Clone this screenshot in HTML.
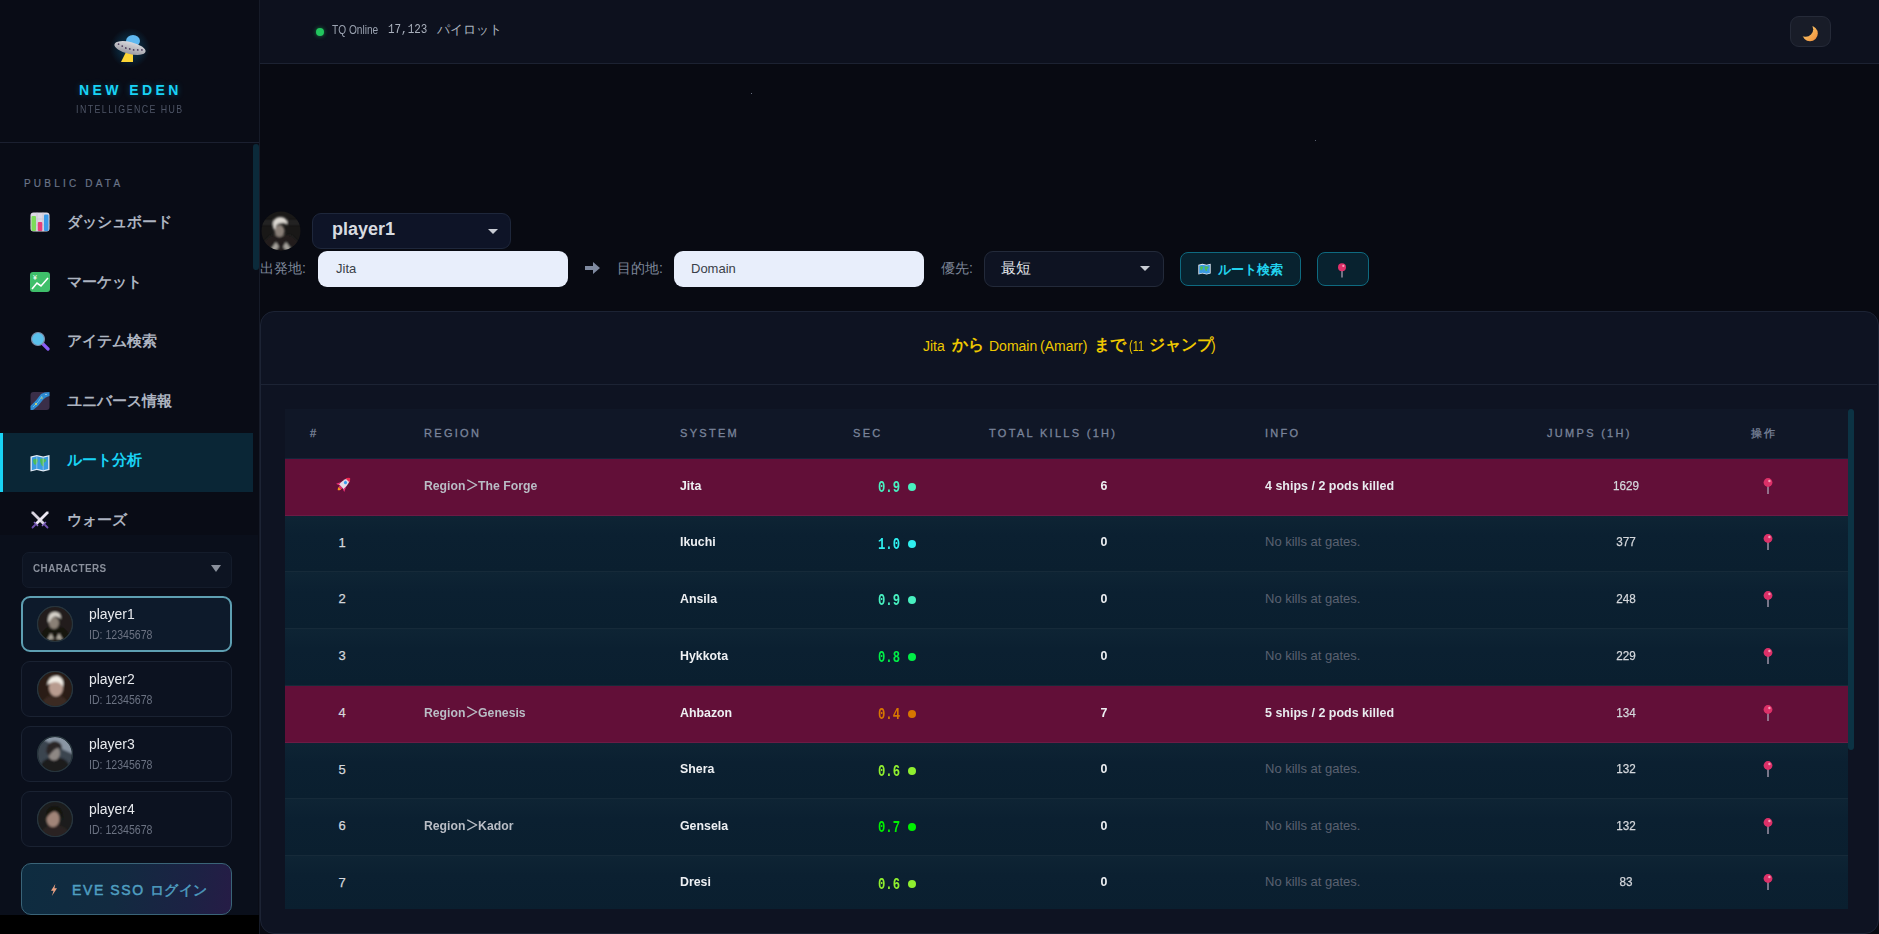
<!DOCTYPE html>
<html><head><meta charset="utf-8">
<style>
*{margin:0;padding:0;box-sizing:border-box}
html,body{width:1879px;height:934px;overflow:hidden;background:#080a12;font-family:"Liberation Sans",sans-serif;color:#d1d5db}
.abs{position:absolute}
#side{position:absolute;left:0;top:0;width:259px;height:915px;background:#090c16}
#sideb{position:absolute;left:0;top:915px;width:259px;height:19px;background:#000}
#sideline{position:absolute;left:259px;top:0;width:1px;height:934px;background:#161b28}
#logo{position:absolute;left:0;top:0;width:259px;height:143px;border-bottom:1px solid #1b2030}
.t{position:absolute;white-space:nowrap}
.nav{position:absolute;left:0;width:253px;height:59px}
.nav .ic{position:absolute;left:30px;top:20px;width:20px;height:20px}
.nav .tx{position:absolute;left:67px;top:0;line-height:59px;font-size:15px;font-weight:bold;color:#adb4c0}
#header{position:absolute;left:260px;top:0;width:1619px;height:64px;background:#0d111e;border-bottom:1px solid #1c2232}
#main{position:absolute;left:260px;top:64px;width:1619px;height:870px;background:#080a12}
.th{font-size:11px;letter-spacing:2.3px;color:#7a849a;line-height:14px;-webkit-text-stroke:0.3px #7a849a}
.td{font-size:13px;color:#d4d7dc;line-height:16px}
.num{}
.num{display:block;-webkit-text-stroke:0.25px #d4d7dc}
.reg{font-weight:bold;color:#b9bdc5;transform:scaleX(0.94);transform-origin:left}
.sys{font-weight:bold;color:#eef0f3;transform:scaleX(0.95);transform-origin:left}
.sec{font-family:"Liberation Mono",monospace;font-weight:bold;font-size:17px;transform:scaleX(0.72);transform-origin:left}
.info{font-weight:bold;color:#e8eaee;transform:scaleX(0.96);transform-origin:left}
.nok{color:#5a6170}
.ttl{top:337px;font-size:14px;line-height:18px;color:#eec800}
.jp{font-size:15.5px;font-weight:bold;top:336px}
</style></head><body>
<div id="main">
  <div id="stars" class="abs" style="left:491px;top:29px;width:1px;height:1px;background:#6a7080"></div><div class="abs" style="left:1055px;top:76px;width:1px;height:1px;background:#5a6070"></div>
  <svg class="abs" style="left:1px;top:147px" width="40" height="40" viewBox="0 0 40 40"><defs><clipPath id="mav"><circle cx="20" cy="20" r="19.5"/></clipPath><filter id="bl" x="-10%" y="-10%" width="120%" height="120%"><feGaussianBlur stdDeviation="0.9"/></filter></defs>
<g clip-path="url(#mav)"><rect width="40" height="40" fill="#191817"/><g filter="url(#bl)"><rect y="9" width="40" height="5" fill="#242322"/>
<path d="M1,40 Q3,27 11,24 L29,24 Q37,27 39,40Z" fill="#201f1e"/>
<path d="M10,38 L15,31 L18,36 L14,40Z M30,38 L25,31 L22,36 L26,40Z" fill="#a8a49e"/>
<ellipse cx="18.5" cy="20" rx="5" ry="6" fill="#8a8078"/>
<path d="M12,17 Q11,6 19,6 Q27,6 26,14 Q25,11 20,12 Q15,12 14,19Z" fill="#dcd8d2"/></g></g></svg>
  <div class="abs" style="left:52px;top:149px;width:199px;height:36px;border-radius:9px;background:#0e1427;border:1px solid #1e273b"></div>
  <div class="t" style="left:72px;top:155px;font-size:18px;font-weight:bold;color:#d8dbe0">player1</div>
  <div class="abs" style="left:228px;top:165px;width:0;height:0;border-left:5px solid transparent;border-right:5px solid transparent;border-top:5px solid #c8ccd4"></div>

  <div class="t" style="left:0px;top:196px;font-size:14px;color:#7d8698">出発地:</div>
  <div class="abs" style="left:58px;top:187px;width:250px;height:36px;border-radius:9px;background:#e8eefb"></div>
  <div class="t" style="left:76px;top:197px;font-size:13px;color:#3a3f48">Jita</div>
  <svg class="abs" style="left:325px;top:198px" width="15" height="12" viewBox="0 0 15 12"><path d="M0,4 L8,4 L8,0 L15,6 L8,12 L8,8 L0,8Z" fill="#7f8aa0"/></svg>
  <div class="t" style="left:357px;top:196px;font-size:14px;color:#7d8698">目的地:</div>
  <div class="abs" style="left:414px;top:187px;width:250px;height:36px;border-radius:9px;background:#e8eefb"></div>
  <div class="t" style="left:431px;top:197px;font-size:13px;color:#3a3f48">Domain</div>
  <div class="t" style="left:681px;top:196px;font-size:14px;color:#7d8698">優先:</div>
  <div class="abs" style="left:724px;top:187px;width:180px;height:36px;border-radius:9px;background:#0e1322;border:1px solid #232a3a"></div>
  <div class="t" style="left:741px;top:195px;font-size:15px;font-weight:500;color:#e2e5ea">最短</div>
  <div class="abs" style="left:880px;top:202px;width:0;height:0;border-left:5px solid transparent;border-right:5px solid transparent;border-top:5px solid #c8ccd4"></div>
  <div class="abs" style="left:920px;top:188px;width:121px;height:34px;border-radius:8px;background:#08222f;border:1px solid #0e6a80"></div>
  <svg class="abs" style="left:938px;top:199px" width="13" height="12" viewBox="0 0 20 18"><path d="M0.5,2.5 L6.8,1 L13.2,2.5 L19.5,1 L19.5,16 L13.2,17.5 L6.8,16 L0.5,17.5Z" fill="#e6eef8"/><path d="M1.8,3.5 L6.8,2.3 L13.2,3.8 L18.2,2.5 L18.2,15 L13.2,16.2 L6.8,14.8 L1.8,16.2Z" fill="#3a9ae0"/><path d="M3,6 Q5,4 7.5,5 Q8.5,7 7,9 Q5.5,12 4,10 Q3,8 3,6Z M10,5 Q13,4 16,5.5 Q17,7 15,8 Q13,9 14,12 Q12,13 11,10 Q10,8 10,5Z" fill="#4cbc5a"/></svg>
  <div class="t" style="left:958px;top:197px;font-size:13px;font-weight:bold;color:#22d3ee">ルート検索</div>
  <div class="abs" style="left:1057px;top:188px;width:52px;height:34px;border-radius:8px;background:#08222f;border:1px solid #0e6a80"></div>
  <svg class="abs" style="left:1077px;top:199px" width="10" height="15" viewBox="0 0 10 15"><line x1="5" y1="6" x2="5" y2="14.5" stroke="#a89cb0" stroke-width="1.3"/><circle cx="5" cy="4.3" r="4" fill="#e0306a"/><circle cx="6.3" cy="2.9" r="1.1" fill="#f4a0b8"/></svg>

  <div id="card" class="abs" style="left:0;top:247px;width:1619px;height:623px;border-radius:14px;background:#0e1322;border:1px solid #1c2334">
  </div>
</div>
<!--TABLE-->
<div class="t ttl" style="left:923px">Jita</div><div class="t ttl jp" style="left:952px">から</div><div class="t ttl" style="left:989px">Domain</div><div class="t ttl" style="left:1040px">(Amarr)</div><div class="t ttl jp" style="left:1094px">まで</div><div class="t ttl" style="left:1129px;transform:scaleX(0.78);transform-origin:left">(11</div><div class="t ttl jp" style="left:1149px">ジャンプ</div><div class="t ttl" style="left:1211px">)</div>
<div class="abs" style="left:261px;top:384px;width:1616px;height:1px;background:#1c2334"></div>
<div class="abs" style="left:285px;top:409px;width:1563px;height:500px;background:#0b1c2b;overflow:hidden">
  <div class="abs" style="left:0;top:0;width:1563px;height:50px;background:#101727;border-bottom:1px solid #14253a"></div>
  <div class="t th" style="left:25px;top:17px">#</div>
  <div class="t th" style="left:139px;top:17px">REGION</div>
  <div class="t th" style="left:395px;top:17px">SYSTEM</div>
  <div class="t th" style="left:568px;top:17px">SEC</div>
  <div class="t th" style="left:704px;top:17px">TOTAL KILLS (1H)</div>
  <div class="t th" style="left:980px;top:17px">INFO</div>
  <div class="t th" style="left:1262px;top:17px">JUMPS (1H)</div>
  <div class="t th" style="left:1466px;top:17px">操作</div>
  <div class="abs" style="left:0;top:50px;width:1563px;height:57px;background:#620f38;border-bottom:1px solid #6c1b45"></div>
  <div class="abs" style="left:47.5px;top:65.5px"><svg width="20" height="20" viewBox="0 0 20 20"><g transform="rotate(45 10 10)"><path d="M10,0 Q13.6,3.5 13.4,12.5 L6.6,12.5 Q6.4,3.5 10,0Z" fill="#e6dbe6"/><path d="M10,0 Q12.2,1.6 12.9,3.6 L7.1,3.6 Q7.8,1.6 10,0Z" fill="#ee2a52"/><circle cx="10" cy="6.5" r="1.6" fill="#3a9cf0"/><path d="M6.6,9 L4.2,14 L6.8,13.2Z M13.4,9 L15.8,14 L13.2,13.2Z" fill="#f0307a"/><path d="M8,12.5 L12,12.5 L11.4,15 L10,14.2 L8.6,15Z" fill="#e83070"/><path d="M8.2,14.5 Q10,20 11.8,14.5Z" fill="#f7931e"/></g></svg></div>
  <div class="t td reg" style="left:139px;top:68.5px">Region<svg width="12" height="12" viewBox="0 0 12 12" style="display:inline-block;vertical-align:-1px;margin:0 0.5px 0 1px"><path d="M1,0.8 L11,6 L1,11.2" stroke="#b9bdc5" stroke-width="1.3" fill="none"/></svg>The Forge</div>
  <div class="t td sys" style="left:395px;top:68.5px">Jita</div>
  <div class="t td sec" style="left:592.5px;top:71.0px;color:#48f0c0">0.9</div>
  <div class="abs" style="left:623px;top:74.0px;width:8px;height:8px;border-radius:50%;background:#48f0c0"></div>
  <div class="t td sys" style="left:680.5px;width:276px;text-align:center;top:68.5px;transform-origin:center">6</div>
  <div class="t td info" style="left:980px;top:68.5px">4 ships / 2 pods killed</div>
  <div class="t td num" style="left:1238.5px;width:204px;text-align:center;top:68.5px;transform:scaleX(0.9)">1629</div>
  <div class="abs" style="left:1478px;top:68.5px"><svg width="10" height="16" viewBox="0 0 10 16"><line x1="5" y1="7" x2="5" y2="16" stroke="#a89cb0" stroke-width="1.4"/><circle cx="5" cy="4.5" r="4.4" fill="#dc3068"/><circle cx="6.4" cy="3" r="1.2" fill="#f4a0b8"/></svg></div>
  <div class="abs" style="left:0;top:107px;width:1563px;height:56px;background:linear-gradient(180deg,#0e2434 0,#0b2031 35%,#0a1f2f 100%);border-bottom:1px solid #162a39"></div>
  <div class="t td num" style="left:0;width:114px;text-align:center;top:125.5px">1</div>
  <div class="t td sys" style="left:395px;top:125.0px">Ikuchi</div>
  <div class="t td sec" style="left:592.5px;top:127.5px;color:#2fefef">1.0</div>
  <div class="abs" style="left:623px;top:130.5px;width:8px;height:8px;border-radius:50%;background:#2fefef"></div>
  <div class="t td sys" style="left:680.5px;width:276px;text-align:center;top:125.0px;transform-origin:center">0</div>
  <div class="t td nok" style="left:980px;top:125.0px">No kills at gates.</div>
  <div class="t td num" style="left:1238.5px;width:204px;text-align:center;top:125.0px;transform:scaleX(0.9)">377</div>
  <div class="abs" style="left:1478px;top:125.0px"><svg width="10" height="16" viewBox="0 0 10 16"><line x1="5" y1="7" x2="5" y2="16" stroke="#a89cb0" stroke-width="1.4"/><circle cx="5" cy="4.5" r="4.4" fill="#dc3068"/><circle cx="6.4" cy="3" r="1.2" fill="#f4a0b8"/></svg></div>
  <div class="abs" style="left:0;top:163px;width:1563px;height:57px;background:linear-gradient(180deg,#0e2434 0,#0b2031 35%,#0a1f2f 100%);border-bottom:1px solid #162a39"></div>
  <div class="t td num" style="left:0;width:114px;text-align:center;top:182.0px">2</div>
  <div class="t td sys" style="left:395px;top:181.5px">Ansila</div>
  <div class="t td sec" style="left:592.5px;top:184.0px;color:#48f0c0">0.9</div>
  <div class="abs" style="left:623px;top:187.0px;width:8px;height:8px;border-radius:50%;background:#48f0c0"></div>
  <div class="t td sys" style="left:680.5px;width:276px;text-align:center;top:181.5px;transform-origin:center">0</div>
  <div class="t td nok" style="left:980px;top:181.5px">No kills at gates.</div>
  <div class="t td num" style="left:1238.5px;width:204px;text-align:center;top:181.5px;transform:scaleX(0.9)">248</div>
  <div class="abs" style="left:1478px;top:181.5px"><svg width="10" height="16" viewBox="0 0 10 16"><line x1="5" y1="7" x2="5" y2="16" stroke="#a89cb0" stroke-width="1.4"/><circle cx="5" cy="4.5" r="4.4" fill="#dc3068"/><circle cx="6.4" cy="3" r="1.2" fill="#f4a0b8"/></svg></div>
  <div class="abs" style="left:0;top:220px;width:1563px;height:57px;background:linear-gradient(180deg,#0e2434 0,#0b2031 35%,#0a1f2f 100%);border-bottom:1px solid #162a39"></div>
  <div class="t td num" style="left:0;width:114px;text-align:center;top:239.0px">3</div>
  <div class="t td sys" style="left:395px;top:238.5px">Hykkota</div>
  <div class="t td sec" style="left:592.5px;top:241.0px;color:#00ef47">0.8</div>
  <div class="abs" style="left:623px;top:244.0px;width:8px;height:8px;border-radius:50%;background:#00ef47"></div>
  <div class="t td sys" style="left:680.5px;width:276px;text-align:center;top:238.5px;transform-origin:center">0</div>
  <div class="t td nok" style="left:980px;top:238.5px">No kills at gates.</div>
  <div class="t td num" style="left:1238.5px;width:204px;text-align:center;top:238.5px;transform:scaleX(0.9)">229</div>
  <div class="abs" style="left:1478px;top:238.5px"><svg width="10" height="16" viewBox="0 0 10 16"><line x1="5" y1="7" x2="5" y2="16" stroke="#a89cb0" stroke-width="1.4"/><circle cx="5" cy="4.5" r="4.4" fill="#dc3068"/><circle cx="6.4" cy="3" r="1.2" fill="#f4a0b8"/></svg></div>
  <div class="abs" style="left:0;top:277px;width:1563px;height:57px;background:#620f38;border-bottom:1px solid #6c1b45"></div>
  <div class="t td num" style="left:0;width:114px;text-align:center;top:296.0px">4</div>
  <div class="t td reg" style="left:139px;top:295.5px">Region<svg width="12" height="12" viewBox="0 0 12 12" style="display:inline-block;vertical-align:-1px;margin:0 0.5px 0 1px"><path d="M1,0.8 L11,6 L1,11.2" stroke="#b9bdc5" stroke-width="1.3" fill="none"/></svg>Genesis</div>
  <div class="t td sys" style="left:395px;top:295.5px">Ahbazon</div>
  <div class="t td sec" style="left:592.5px;top:298.0px;color:#d77700">0.4</div>
  <div class="abs" style="left:623px;top:301.0px;width:8px;height:8px;border-radius:50%;background:#d77700"></div>
  <div class="t td sys" style="left:680.5px;width:276px;text-align:center;top:295.5px;transform-origin:center">7</div>
  <div class="t td info" style="left:980px;top:295.5px">5 ships / 2 pods killed</div>
  <div class="t td num" style="left:1238.5px;width:204px;text-align:center;top:295.5px;transform:scaleX(0.9)">134</div>
  <div class="abs" style="left:1478px;top:295.5px"><svg width="10" height="16" viewBox="0 0 10 16"><line x1="5" y1="7" x2="5" y2="16" stroke="#a89cb0" stroke-width="1.4"/><circle cx="5" cy="4.5" r="4.4" fill="#dc3068"/><circle cx="6.4" cy="3" r="1.2" fill="#f4a0b8"/></svg></div>
  <div class="abs" style="left:0;top:334px;width:1563px;height:56px;background:linear-gradient(180deg,#0e2434 0,#0b2031 35%,#0a1f2f 100%);border-bottom:1px solid #162a39"></div>
  <div class="t td num" style="left:0;width:114px;text-align:center;top:352.5px">5</div>
  <div class="t td sys" style="left:395px;top:352.0px">Shera</div>
  <div class="t td sec" style="left:592.5px;top:354.5px;color:#8fef2f">0.6</div>
  <div class="abs" style="left:623px;top:357.5px;width:8px;height:8px;border-radius:50%;background:#8fef2f"></div>
  <div class="t td sys" style="left:680.5px;width:276px;text-align:center;top:352.0px;transform-origin:center">0</div>
  <div class="t td nok" style="left:980px;top:352.0px">No kills at gates.</div>
  <div class="t td num" style="left:1238.5px;width:204px;text-align:center;top:352.0px;transform:scaleX(0.9)">132</div>
  <div class="abs" style="left:1478px;top:352.0px"><svg width="10" height="16" viewBox="0 0 10 16"><line x1="5" y1="7" x2="5" y2="16" stroke="#a89cb0" stroke-width="1.4"/><circle cx="5" cy="4.5" r="4.4" fill="#dc3068"/><circle cx="6.4" cy="3" r="1.2" fill="#f4a0b8"/></svg></div>
  <div class="abs" style="left:0;top:390px;width:1563px;height:57px;background:linear-gradient(180deg,#0e2434 0,#0b2031 35%,#0a1f2f 100%);border-bottom:1px solid #162a39"></div>
  <div class="t td num" style="left:0;width:114px;text-align:center;top:409.0px">6</div>
  <div class="t td reg" style="left:139px;top:408.5px">Region<svg width="12" height="12" viewBox="0 0 12 12" style="display:inline-block;vertical-align:-1px;margin:0 0.5px 0 1px"><path d="M1,0.8 L11,6 L1,11.2" stroke="#b9bdc5" stroke-width="1.3" fill="none"/></svg>Kador</div>
  <div class="t td sys" style="left:395px;top:408.5px">Gensela</div>
  <div class="t td sec" style="left:592.5px;top:411.0px;color:#00f000">0.7</div>
  <div class="abs" style="left:623px;top:414.0px;width:8px;height:8px;border-radius:50%;background:#00f000"></div>
  <div class="t td sys" style="left:680.5px;width:276px;text-align:center;top:408.5px;transform-origin:center">0</div>
  <div class="t td nok" style="left:980px;top:408.5px">No kills at gates.</div>
  <div class="t td num" style="left:1238.5px;width:204px;text-align:center;top:408.5px;transform:scaleX(0.9)">132</div>
  <div class="abs" style="left:1478px;top:408.5px"><svg width="10" height="16" viewBox="0 0 10 16"><line x1="5" y1="7" x2="5" y2="16" stroke="#a89cb0" stroke-width="1.4"/><circle cx="5" cy="4.5" r="4.4" fill="#dc3068"/><circle cx="6.4" cy="3" r="1.2" fill="#f4a0b8"/></svg></div>
  <div class="abs" style="left:0;top:447px;width:1563px;height:56px;background:linear-gradient(180deg,#0e2434 0,#0b2031 35%,#0a1f2f 100%);border-bottom:1px solid #162a39"></div>
  <div class="t td num" style="left:0;width:114px;text-align:center;top:465.5px">7</div>
  <div class="t td sys" style="left:395px;top:465.0px">Dresi</div>
  <div class="t td sec" style="left:592.5px;top:467.5px;color:#8fef2f">0.6</div>
  <div class="abs" style="left:623px;top:470.5px;width:8px;height:8px;border-radius:50%;background:#8fef2f"></div>
  <div class="t td sys" style="left:680.5px;width:276px;text-align:center;top:465.0px;transform-origin:center">0</div>
  <div class="t td nok" style="left:980px;top:465.0px">No kills at gates.</div>
  <div class="t td num" style="left:1238.5px;width:204px;text-align:center;top:465.0px;transform:scaleX(0.9)">83</div>
  <div class="abs" style="left:1478px;top:465.0px"><svg width="10" height="16" viewBox="0 0 10 16"><line x1="5" y1="7" x2="5" y2="16" stroke="#a89cb0" stroke-width="1.4"/><circle cx="5" cy="4.5" r="4.4" fill="#dc3068"/><circle cx="6.4" cy="3" r="1.2" fill="#f4a0b8"/></svg></div>
</div>
<div class="abs" style="left:1848px;top:409px;width:6px;height:341px;border-radius:3px;background:#0c3344"></div>
<!--/TABLE-->
<!--SIDE-->
<div id="side">
  <div id="logo">
    <svg class="abs" style="left:108px;top:28px" width="44" height="40" viewBox="0 0 44 40">
      <defs>
        <radialGradient id="glow" cx="50%" cy="50%" r="50%"><stop offset="0" stop-color="#0ea5e9" stop-opacity="0.35"/><stop offset="1" stop-color="#0ea5e9" stop-opacity="0"/></radialGradient>
        <linearGradient id="disc" x1="0" y1="0" x2="0" y2="1"><stop offset="0" stop-color="#d8d8dc"/><stop offset="1" stop-color="#9a9aa2"/></linearGradient>
      </defs>
      <circle cx="22" cy="20" r="20" fill="url(#glow)"/>
      <path d="M13,34 L18,24 L25,24 L25,34 Z" fill="#fcd535"/>
      <ellipse cx="25" cy="13" rx="7" ry="6" fill="#5fb8f0"/>
      <g transform="rotate(14 22 20)"><ellipse cx="22" cy="20" rx="16" ry="6" fill="url(#disc)"/>
      <circle cx="10" cy="19" r="0.9" fill="#4a3a5a"/><circle cx="14" cy="20" r="0.9" fill="#4a3a5a"/><circle cx="18" cy="21" r="0.9" fill="#4a3a5a"/><circle cx="22" cy="21" r="0.9" fill="#4a3a5a"/><circle cx="26" cy="21" r="0.9" fill="#4a3a5a"/><circle cx="30" cy="20" r="0.9" fill="#4a3a5a"/><circle cx="34" cy="19" r="0.9" fill="#4a3a5a"/></g>
    </svg>
    <div class="t" style="left:79px;top:82px;font-size:14px;font-weight:bold;letter-spacing:3.4px;color:#19d3f5;text-shadow:0 0 6px rgba(0,200,255,0.3)">NEW EDEN</div>
    <div class="t" style="left:76px;top:103px;font-size:11px;letter-spacing:1.8px;color:#4e5566;transform:scaleX(0.8);transform-origin:left">INTELLIGENCE HUB</div>
  </div>
  <div class="abs" style="left:253px;top:144px;width:6px;height:126px;border-radius:3px;background:#0b2a3a"></div>
  <div class="t" style="left:24px;top:178px;font-size:10px;letter-spacing:3.2px;color:#6a7488;-webkit-text-stroke:0.2px #6a7488">PUBLIC DATA</div>

  <div class="nav" style="top:192px">
    <svg class="ic" viewBox="0 0 20 20"><rect x="0.5" y="0.5" width="19" height="19" rx="3" fill="#dcd8e4"/><path d="M0.5,7 H19.5 M0.5,13 H19.5 M7,0.5 V19.5 M13,0.5 V19.5" stroke="#c4c0cc" stroke-width="0.6"/><rect x="1.5" y="4" width="4.5" height="15" rx="1" fill="#7ddc5a"/><rect x="7.8" y="10" width="4.5" height="9" rx="1" fill="#e8407a"/><rect x="14" y="2.5" width="4.5" height="16.5" rx="1" fill="#3a9ae8"/></svg>
    <div class="tx">ダッシュボード</div>
  </div>
  <div class="nav" style="top:252px">
    <svg class="ic" viewBox="0 0 20 20"><rect x="0" y="0" width="20" height="20" rx="3" fill="#3fbf6a"/><path d="M2,17 L7,11 L11,14 L18,6" stroke="#fff" stroke-width="1.6" fill="none"/><text x="3" y="8" font-size="7" fill="#fff" font-family="Liberation Sans">¥</text></svg>
    <div class="tx">マーケット</div>
  </div>
  <div class="nav" style="top:311px">
    <svg class="ic" viewBox="0 0 20 20"><line x1="12" y1="12" x2="18" y2="18" stroke="#8b5cf6" stroke-width="3.2" stroke-linecap="round"/><circle cx="8" cy="8" r="6.5" fill="#5bc0eb" stroke="#7c8ca8" stroke-width="1.2"/></svg>
    <div class="tx">アイテム検索</div>
  </div>
  <div class="nav" style="top:371px">
    <svg class="ic" viewBox="0 0 20 20"><rect x="0.5" y="1" width="19" height="18" rx="3" fill="#3a2e48"/><path d="M0.5,15 Q7,9 11,3 Q14,1 19.5,1 L19.5,5 Q15,6 12,10 Q8,16 3,19 L0.5,19Z" fill="#2e8ad0"/><path d="M3,16 Q9,11 12,5" stroke="#5cc0f0" stroke-width="1" fill="none"/><circle cx="6" cy="13" r="0.9" fill="#fde047"/><circle cx="12" cy="7" r="0.7" fill="#fde047"/><circle cx="16" cy="3.5" r="0.6" fill="#fff"/></svg>
    <div class="tx">ユニバース情報</div>
  </div>
  <div class="nav" style="top:433px;background:#0a2636;border-left:3px solid #19d3f5">
    <svg class="ic" style="left:27px" viewBox="0 0 20 20"><path d="M0.5,3.5 L6.8,2 L13.2,3.5 L19.5,2 L19.5,17 L13.2,18.5 L6.8,17 L0.5,18.5Z" fill="#e6eef8"/><path d="M1.8,4.5 L6.8,3.3 L13.2,4.8 L18.2,3.5 L18.2,16 L13.2,17.2 L6.8,15.8 L1.8,17.2Z" fill="#3a9ae0"/><path d="M3,7 Q5,5 7.5,6 Q8.5,8 7,10 Q5.5,13 4,11 Q3,9 3,7Z M10,6 Q13,5 16,6.5 Q17,8 15,9 Q13,10 14,13 Q12,14 11,11 Q10,9 10,6Z" fill="#4cbc5a"/><path d="M6.8,3.3 L6.8,15.8 M13.2,4.8 L13.2,17.2" stroke="#c8d8e8" stroke-width="0.6"/></svg>
    <div class="tx" style="left:64px;top:-3px;color:#19d3f5;font-weight:bold">ルート分析</div>
  </div>
  <div class="nav" style="top:490px">
    <svg class="ic" viewBox="0 0 20 20"><path d="M1.5,1.5 L3.5,1.5 L15,13 L13,15 L1.5,3.5Z" fill="#d8d4e0"/><path d="M18.5,1.5 L16.5,1.5 L5,13 L7,15 L18.5,3.5Z" fill="#ece8f2"/><path d="M11.5,15.5 L15.5,11.5 L16.5,12.5 L12.5,16.5Z M3.5,12.5 L4.5,11.5 L8.5,15.5 L7.5,16.5Z" fill="#8a6cc8"/><path d="M15,15 L17.5,17.5 M5,15 L2.5,17.5" stroke="#7050b0" stroke-width="1.8" stroke-linecap="round"/></svg>
    <div class="tx">ウォーズ</div>
  </div>

  <div class="abs" style="left:0;top:535px;width:258px;height:380px;background:#0a0f1b"></div>
  <div class="abs" style="left:22px;top:552px;width:210px;height:36px;border-radius:7px;background:#0d1422;border:1px solid #141c2b"></div>
  <div class="t" style="left:33px;top:562px;font-size:11.5px;font-weight:bold;letter-spacing:0.5px;color:#8a909c;transform:scaleX(0.86);transform-origin:left">CHARACTERS</div>
  <div class="abs" style="left:211px;top:565px;width:0;height:0;border-left:5px solid transparent;border-right:5px solid transparent;border-top:7px solid #8a909c"></div>
  <div class="abs" style="left:21px;top:596px;width:211px;height:56px;border-radius:9px;background:#0d1a2b;border:2px solid #5e9fb2"></div>
  <div class="abs" style="left:37px;top:606px"><svg width="36" height="36" viewBox="0 0 36 36"><defs><clipPath id="av0"><circle cx="18" cy="18" r="17"/></clipPath></defs>
<circle cx="18" cy="18" r="17.5" fill="#1a1d22" stroke="#2a3a44" stroke-width="1"/>
<defs><filter id="avb0" x="-10%" y="-10%" width="120%" height="120%"><feGaussianBlur stdDeviation="1"/></filter></defs><g clip-path="url(#av0)"><g filter="url(#avb0)"><rect width="36" height="36" fill="#201c1a"/><path d="M2,36 Q4,24 11,21 L25,21 Q32,24 34,36Z" fill="#15120f"/><path d="M10,34 L14,27 L17,33Z M26,34 L22,27 L19,33Z" fill="#b0aa9e"/><ellipse cx="17" cy="17" rx="5" ry="6" fill="#8a8076"/><path d="M11,15 Q11,6 18,6 Q24,6 24,13 Q22,10 18,10.5 Q14,11 12,17Z" fill="#d8d4cc"/></g></g><circle cx="18" cy="18" r="17.5" fill="none" stroke="#27343c" stroke-width="1.2"/></svg></div>
  <div class="t" style="left:89px;top:605px;font-size:15.5px;color:#e8eaee;transform:scaleX(0.9);transform-origin:left">player1</div>
  <div class="t" style="left:89px;top:628px;font-size:12px;color:#6b7282;transform:scaleX(0.88);transform-origin:left">ID: 12345678</div>
  <div class="abs" style="left:21px;top:661px;width:211px;height:56px;border-radius:9px;background:#0c1220;border:1px solid #1a2232"></div>
  <div class="abs" style="left:37px;top:671px"><svg width="36" height="36" viewBox="0 0 36 36"><defs><clipPath id="av1"><circle cx="18" cy="18" r="17"/></clipPath></defs>
<circle cx="18" cy="18" r="17.5" fill="#1a1d22" stroke="#2a3a44" stroke-width="1"/>
<defs><filter id="avb1" x="-10%" y="-10%" width="120%" height="120%"><feGaussianBlur stdDeviation="1"/></filter></defs><g clip-path="url(#av1)"><g filter="url(#avb1)"><rect width="36" height="36" fill="#2a1a14"/><ellipse cx="18" cy="32" rx="12" ry="8" fill="#3a2a22"/><ellipse cx="19" cy="17" rx="7" ry="8.5" fill="#b89c90"/><path d="M10,14 Q12,4 21,5 Q28,8 26,16 Q22,9 14,12Z" fill="#f0ece4"/></g></g><circle cx="18" cy="18" r="17.5" fill="none" stroke="#27343c" stroke-width="1.2"/></svg></div>
  <div class="t" style="left:89px;top:670px;font-size:15.5px;color:#e8eaee;transform:scaleX(0.9);transform-origin:left">player2</div>
  <div class="t" style="left:89px;top:693px;font-size:12px;color:#6b7282;transform:scaleX(0.88);transform-origin:left">ID: 12345678</div>
  <div class="abs" style="left:21px;top:726px;width:211px;height:56px;border-radius:9px;background:#0c1220;border:1px solid #1a2232"></div>
  <div class="abs" style="left:37px;top:736px"><svg width="36" height="36" viewBox="0 0 36 36"><defs><clipPath id="av2"><circle cx="18" cy="18" r="17"/></clipPath></defs>
<circle cx="18" cy="18" r="17.5" fill="#1a1d22" stroke="#2a3a44" stroke-width="1"/>
<defs><filter id="avb2" x="-10%" y="-10%" width="120%" height="120%"><feGaussianBlur stdDeviation="1"/></filter></defs><g clip-path="url(#av2)"><g filter="url(#avb2)"><rect width="36" height="36" fill="#3a4450"/><path d="M0,0 L36,0 L36,18 L18,10 Z" fill="#8a96a4"/><ellipse cx="18" cy="30" rx="14" ry="9" fill="#1a1a1e"/><ellipse cx="17" cy="17" rx="6" ry="7.5" fill="#8e8884"/><path d="M9,16 Q10,5 18,5 Q26,6 25,14 Q20,8 12,20Z" fill="#2a2628"/></g></g><circle cx="18" cy="18" r="17.5" fill="none" stroke="#27343c" stroke-width="1.2"/></svg></div>
  <div class="t" style="left:89px;top:735px;font-size:15.5px;color:#e8eaee;transform:scaleX(0.9);transform-origin:left">player3</div>
  <div class="t" style="left:89px;top:758px;font-size:12px;color:#6b7282;transform:scaleX(0.88);transform-origin:left">ID: 12345678</div>
  <div class="abs" style="left:21px;top:791px;width:211px;height:56px;border-radius:9px;background:#0c1220;border:1px solid #1a2232"></div>
  <div class="abs" style="left:37px;top:801px"><svg width="36" height="36" viewBox="0 0 36 36"><defs><clipPath id="av3"><circle cx="18" cy="18" r="17"/></clipPath></defs>
<circle cx="18" cy="18" r="17.5" fill="#1a1d22" stroke="#2a3a44" stroke-width="1"/>
<defs><filter id="avb3" x="-10%" y="-10%" width="120%" height="120%"><feGaussianBlur stdDeviation="1"/></filter></defs><g clip-path="url(#av3)"><g filter="url(#avb3)"><rect width="36" height="36" fill="#1a1e1c"/><ellipse cx="18" cy="32" rx="13" ry="8" fill="#2a2420"/><ellipse cx="16" cy="18" rx="6.5" ry="8" fill="#a08478"/><path d="M9,18 Q8,5 18,5 Q27,6 26,20 Q24,10 18,10 Q12,12 9,18Z" fill="#161210"/></g></g><circle cx="18" cy="18" r="17.5" fill="none" stroke="#27343c" stroke-width="1.2"/></svg></div>
  <div class="t" style="left:89px;top:800px;font-size:15.5px;color:#e8eaee;transform:scaleX(0.9);transform-origin:left">player4</div>
  <div class="t" style="left:89px;top:823px;font-size:12px;color:#6b7282;transform:scaleX(0.88);transform-origin:left">ID: 12345678</div>

  <div class="abs" style="left:21px;top:863px;width:211px;height:52px;border-radius:10px;background:linear-gradient(100deg,#0e2c40 0%,#122a40 45%,#1c2244 80%,#261c46 100%);border:1.5px solid #3a6478"></div>
  <svg class="abs" style="left:50px;top:884px" width="8" height="12" viewBox="0 0 9 14"><path d="M6,0 L1,8 L4,8 L2,14 L8,5 L5,5Z" fill="#eba283"/></svg>
  <div class="t" style="left:72px;top:882px;font-size:14px;letter-spacing:1.6px;color:#4f9ec0;-webkit-text-stroke:0.5px #4f9ec0">EVE SSO <span style="letter-spacing:0.3px">ログイン</span></div>
</div>
<div id="sideb"></div>
<div id="sideline"></div>
<div id="header">
  <div class="abs" style="left:56px;top:28px;width:8px;height:8px;border-radius:50%;background:#22c55e;box-shadow:0 0 4px rgba(34,197,94,0.6)"></div>
  <div class="t" style="left:72px;top:22px;font-size:13px;color:#9aa2b0;transform:scaleX(0.78);transform-origin:left">TQ Online</div>
  <div class="t" style="left:128px;top:22px;font-size:13px;font-family:'Liberation Mono',monospace;color:#aab1bd;transform:scaleX(0.84);transform-origin:left">17,123</div><div class="t" style="left:177px;top:22px;font-size:12.5px;color:#aab1bd">パイロット</div>
  <div class="abs" style="left:1530px;top:16px;width:41px;height:31px;border-radius:9px;background:#181c28;border:1px solid #252a38"></div>
  <svg class="abs" style="left:1540px;top:24px" width="18" height="18" viewBox="0 0 18 18"><defs><mask id="mm"><rect width="18" height="18" fill="#fff"/><circle cx="5.6" cy="5.2" r="7.6" fill="#000"/></mask><linearGradient id="mg" x1="0" y1="0" x2="1" y2="1"><stop offset="0" stop-color="#fcd978"/><stop offset="1" stop-color="#f08a36"/></linearGradient></defs><circle cx="10" cy="9.5" r="7.8" fill="url(#mg)" mask="url(#mm)"/></svg>
</div>
<!--/SIDE-->
</body></html>
